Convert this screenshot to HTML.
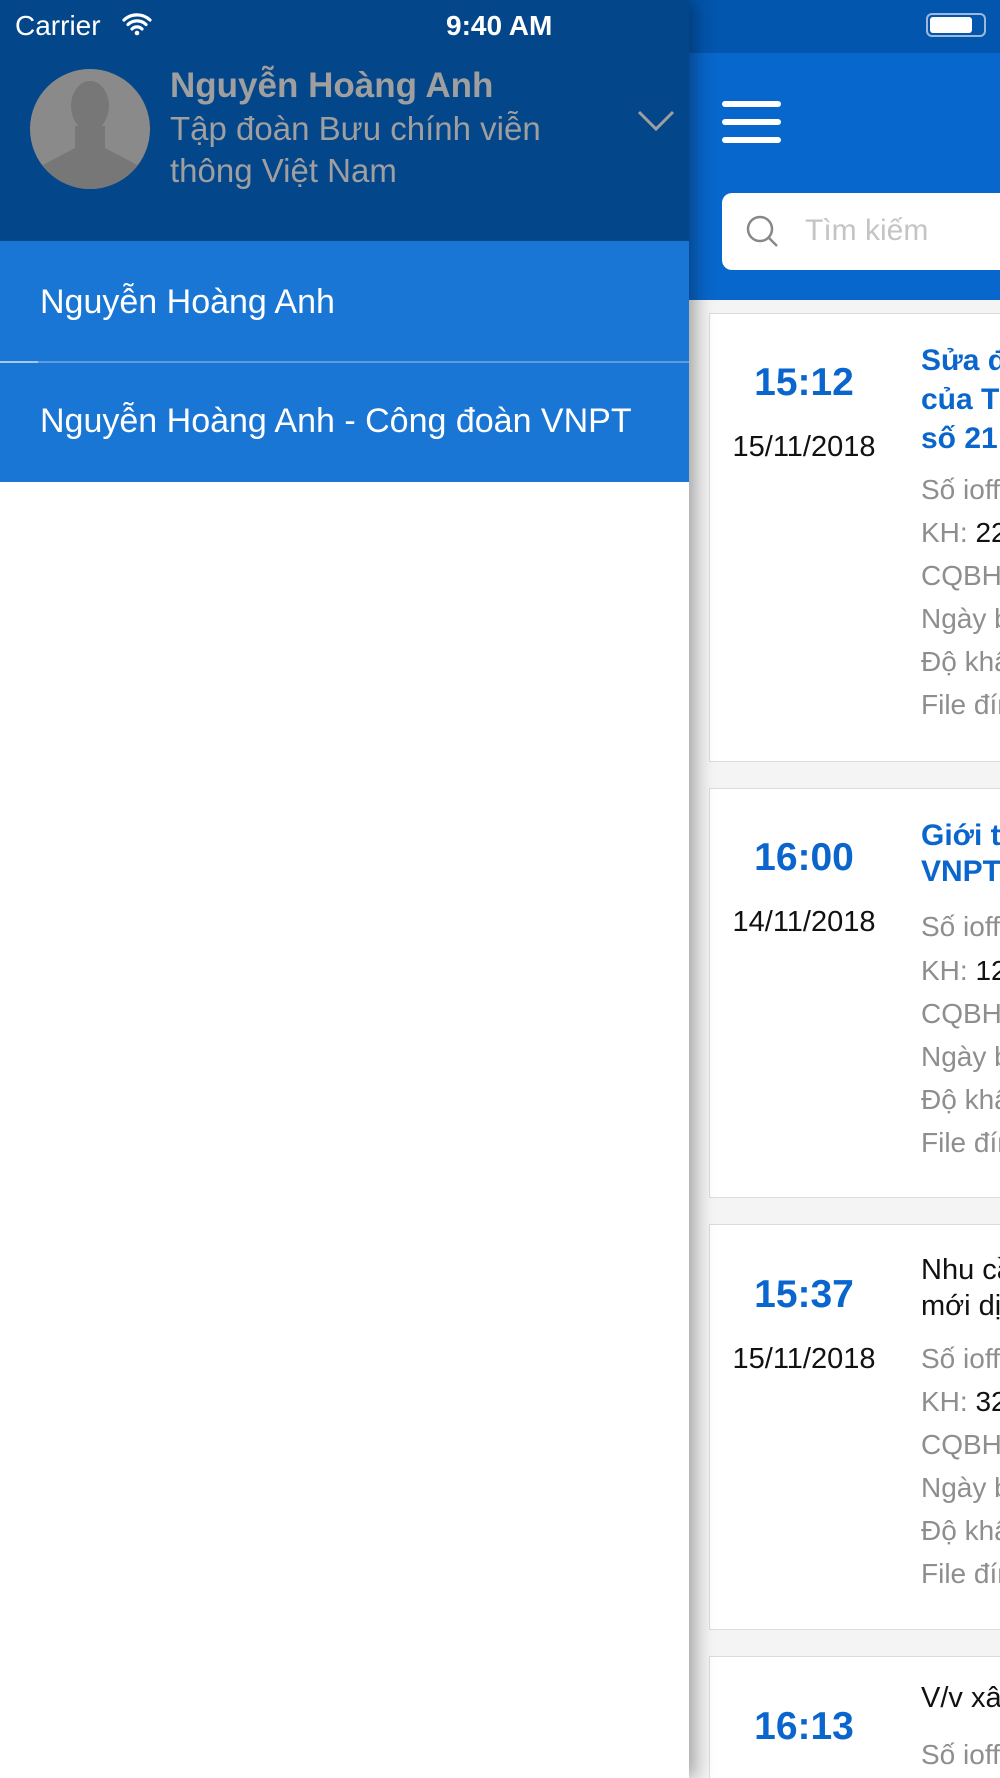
<!DOCTYPE html><html><head><meta charset="utf-8"><style>
*{margin:0;padding:0;box-sizing:border-box}
html,body{width:1000px;height:1778px;overflow:hidden}
body{position:relative;background:#fff;font-family:"Liberation Sans","Noto Sans CJK SC",sans-serif}
.a{position:absolute;white-space:nowrap}
.card{position:absolute;left:709px;width:320px;background:#fff;border:1px solid #dcdcdc}
.time{position:absolute;color:#0a66cc;font-weight:bold;font-size:39px;width:190px;text-align:center;left:709px;line-height:44px}
.date{position:absolute;color:#111;font-size:29px;width:190px;text-align:center;left:709px;line-height:34px}
.ti{position:absolute;left:921px;color:#0a66cc;font-weight:bold;font-size:30px;line-height:39px;white-space:nowrap}
.tb{position:absolute;left:921px;color:#111;font-size:29px;line-height:39px;white-space:nowrap}
.d{position:absolute;left:921px;color:#8e8e8e;font-size:28px;line-height:34px;white-space:nowrap}
.d b{font-weight:normal;color:#111}
</style></head><body>
<div class="a" style="left:689px;top:0;width:311px;height:53px;background:#0256ad"></div>
<div class="a" style="left:689px;top:53px;width:311px;height:247px;background:#0867cc"></div>
<div class="a" style="left:689px;top:300px;width:311px;height:1478px;background:#f4f4f4"></div>
<div class="a" style="left:926px;top:13px;width:60px;height:24px;border:2px solid #9fb8d8;border-radius:6px"></div>
<div class="a" style="left:930px;top:17px;width:42px;height:16px;background:#fff;border-radius:3px"></div>
<div class="a" style="left:722px;top:101px;width:59px;height:6px;background:#fff;border-radius:3px"></div>
<div class="a" style="left:722px;top:119px;width:59px;height:6px;background:#fff;border-radius:3px"></div>
<div class="a" style="left:722px;top:137px;width:59px;height:6px;background:#fff;border-radius:3px"></div>
<div class="a" style="left:722px;top:193px;width:300px;height:77px;background:#fff;border-radius:10px"></div>
<svg class="a" style="left:744px;top:212px" width="40" height="40" viewBox="0 0 40 40"><circle cx="16" cy="17" r="12" fill="none" stroke="#888" stroke-width="2.5"/><path d="M25 26l8 8" stroke="#888" stroke-width="2.5"/></svg>
<div class="a" style="left:805px;top:213px;font-size:30px;line-height:36px;color:#c4c4c4">Tìm kiếm</div>

<div class="card" style="top:313px;height:449px"></div>
<div class="card" style="top:788px;height:410px"></div>
<div class="card" style="top:1224px;height:406px"></div>
<div class="card" style="top:1656px;height:130px"></div>

<div class="time" style="top:361px">15:12</div>
<div class="date" style="top:430px">15/11/2018</div>
<div class="ti" style="top:341px">Sửa đổi</div>
<div class="ti" style="top:380px">của Tập</div>
<div class="ti" style="top:419px">số 21</div>
<div class="d" style="top:473px">Số ioffice</div>
<div class="d" style="top:516px">KH: <b>22</b></div>
<div class="d" style="top:559px">CQBH</div>
<div class="d" style="top:602px">Ngày ban</div>
<div class="d" style="top:645px">Độ khẩn</div>
<div class="d" style="top:688px">File đính</div>

<div class="time" style="top:836px">16:00</div>
<div class="date" style="top:905px">14/11/2018</div>
<div class="ti" style="top:816px">Giới thiệu</div>
<div class="ti" style="top:852px">VNPT</div>
<div class="d" style="top:910px">Số ioffice</div>
<div class="d" style="top:954px">KH: <b>12</b></div>
<div class="d" style="top:997px">CQBH</div>
<div class="d" style="top:1040px">Ngày ban</div>
<div class="d" style="top:1083px">Độ khẩn</div>
<div class="d" style="top:1126px">File đính</div>

<div class="time" style="top:1273px">15:37</div>
<div class="date" style="top:1342px">15/11/2018</div>
<div class="tb" style="top:1251px">Nhu cầu</div>
<div class="tb" style="top:1287px">mới dịch</div>
<div class="d" style="top:1342px">Số ioffice</div>
<div class="d" style="top:1385px">KH: <b>32</b></div>
<div class="d" style="top:1428px">CQBH</div>
<div class="d" style="top:1471px">Ngày ban</div>
<div class="d" style="top:1514px">Độ khẩn</div>
<div class="d" style="top:1557px">File đính</div>

<div class="time" style="top:1705px">16:13</div>
<div class="tb" style="top:1679px">V/v xây</div>
<div class="d" style="top:1738px">Số ioffice</div>

<div class="a" style="left:0;top:0;width:689px;height:1778px;background:#fff;box-shadow:6px 0 18px rgba(0,0,0,0.35)"></div>
<div class="a" style="left:0;top:0;width:689px;height:241px;background:#04468a"></div>
<div class="a" style="left:15px;top:8px;font-size:28px;line-height:36px;color:#fff">Carrier</div>
<svg class="a" style="left:122px;top:12px" width="30" height="24" viewBox="0 0 30 24"><path d="M2 8a19 19 0 0 1 26 0M6 12.5a13 13 0 0 1 18 0M10 17a7 7 0 0 1 10 0" fill="none" stroke="#fff" stroke-width="3.2" stroke-linecap="round"/><circle cx="15" cy="21" r="2.3" fill="#fff"/></svg>
<div class="a" style="left:446px;top:8px;font-size:28px;line-height:36px;color:#fff;font-weight:bold">9:40 AM</div>
<svg class="a" style="left:29px;top:68px" width="122" height="122" viewBox="0 0 122 122"><defs><clipPath id="c"><circle cx="61" cy="61" r="60"/></clipPath></defs><circle cx="61" cy="61" r="60" fill="#8a8a8a"/><g clip-path="url(#c)" fill="#777"><ellipse cx="61" cy="38" rx="19" ry="25"/><path d="M46 58h30v22l34 18v30H12V98l34-18z"/></g></svg>
<div class="a" style="left:170px;top:65px;font-size:35px;line-height:42px;color:#9f9f9f;font-weight:bold">Nguyễn Hoàng Anh</div>
<div class="a" style="left:170px;top:108px;font-size:33px;line-height:42px;color:#9f9f9f">Tập đoàn Bưu chính viễn</div>
<div class="a" style="left:170px;top:150px;font-size:33px;line-height:42px;color:#9f9f9f">thông Việt Nam</div>
<svg class="a" style="left:636px;top:108px" width="40" height="26" viewBox="0 0 40 26"><path d="M3 4l17 17L37 4" fill="none" stroke="#9f9f9f" stroke-width="3"/></svg>
<div class="a" style="left:0;top:241px;width:689px;height:241px;background:#1976d4"></div>
<div class="a" style="left:0;top:361px;width:689px;height:2px;background:#5b9de0"></div>
<div class="a" style="left:0;top:361px;width:38px;height:2px;background:#a8c8ee"></div>
<div class="a" style="left:40px;top:281px;font-size:34px;line-height:42px;color:#fff">Nguyễn Hoàng Anh</div>
<div class="a" style="left:40px;top:400px;font-size:34px;line-height:42px;color:#fff">Nguyễn Hoàng Anh - Công đoàn VNPT</div>
</body></html>
